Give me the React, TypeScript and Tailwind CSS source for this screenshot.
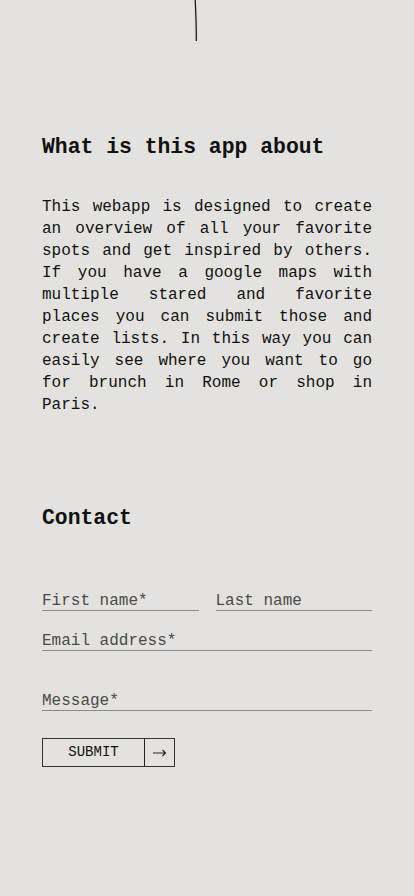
const mono = { fontFamily: '"Liberation Mono", "DejaVu Sans Mono", monospace' };

function Field({ label, className = '' }: { label: string; className?: string }) {
  return (
    <input
      type="text"
      placeholder={label}
      className={`h-[24px] w-full pt-[5px] bg-transparent border-b border-[#8c8b87] text-[16px] leading-[18px] text-[#222] placeholder:text-[#4a4a4a] outline-none ${className}`}
    />
  );
}

function App() {
  return (
    <div className="min-h-[896px] w-full bg-[#e3e2de] text-[#111]" style={mono}>
      {/* thin line at the top */}
      <div className="flex justify-center">
        <svg width="8" height="41" viewBox="0 0 8 41" className="ml-[-22px]">
          <path d="M3.2 0 C3.8 12, 4.4 26, 4.3 41" stroke="#1a1a1a" strokeWidth="1.3" fill="none" />
        </svg>
      </div>

      <div className="px-[42px]">
        {/* About */}
        <h2 className="mt-[92px] text-[21.4px] leading-[28px] font-bold">What is this app about</h2>
        <p className="mt-[35px] text-[16px] leading-[22px] text-justify">
          This webapp is designed to create an overview of all your favorite spots and get inspired by
          others. If you have a google maps with multiple stared and favorite places you can submit
          those and create lists. In this way you can easily see where you want to go for brunch in Rome
          or shop in Paris.
        </p>

        {/* Contact */}
        <h2 className="mt-[88px] text-[21.4px] leading-[28px] font-bold">Contact</h2>
        <form className="mt-[55px] flex flex-col" onSubmit={(e) => e.preventDefault()}>
          <div className="flex gap-[17px]">
            <Field label="First name*" />
            <Field label="Last name" />
          </div>
          <Field label="Email address*" className="mt-[16px]" />
          <Field label="Message*" className="mt-[36px]" />
          <div className="mt-[27px] flex">
            <button
              type="submit"
              className="flex h-[29px] border border-[#333] text-[14px] text-[#111]"
            >
              <span className="flex w-[102px] items-center justify-center border-r border-[#222]">SUBMIT</span>
              <span className="flex w-[29px] items-center justify-center">
                <svg width="14" height="8" viewBox="0 0 14 8">
                  <path d="M0 4 H12.5 M9.5 1 L12.5 4 L9.5 7" stroke="#222" strokeWidth="1.1" fill="none" />
                </svg>
              </span>
            </button>
          </div>
        </form>
      </div>
    </div>
  );
}

export default App;
